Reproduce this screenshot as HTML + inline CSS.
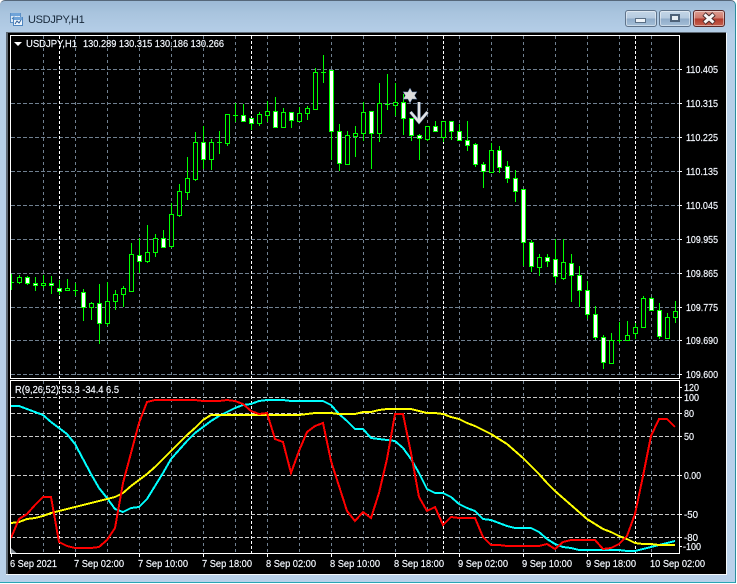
<!DOCTYPE html>
<html><head><meta charset="utf-8"><title>USDJPY,H1</title>
<style>
html,body{margin:0;padding:0;background:#fff}
body{width:737px;height:584px;overflow:hidden;position:relative;font-family:"Liberation Sans",sans-serif}
#win{position:absolute;left:0;top:0;width:736px;height:583px;background:linear-gradient(#9cb9d6 0,#a9c4de 12px,#b6cfe8 34px,#b9d1ea 100%);border-top:1px solid #56677a;border-right:1px solid #2a8f9f;border-bottom:1px solid #2aa5b5;box-sizing:border-box;border-top-right-radius:5px;border-top-left-radius:5px}
.t{position:absolute;left:28px;top:13px;font-size:11px;color:#17283a;letter-spacing:-.3px;line-height:14px}
.b{position:absolute;top:10px;height:17px;box-sizing:border-box;border:1px solid #5f738a;border-radius:3px;box-shadow:inset 0 0 0 1px rgba(255,255,255,.45)}
.bb{background:linear-gradient(#c3d5e7 0,#b5cadf 48%,#8fabc8 52%,#a5bfd8 100%)}
.br{background:linear-gradient(#dc9d92 0,#cf7a6c 48%,#b23a2c 52%,#c4604f 100%);border-color:#5a2a2a}
#c{position:absolute;left:0;top:0}
</style></head><body>
<div id="win"></div>
<div class="t">USDJPY,H1</div>
<div class="b bb" style="left:625px;width:32px"><div style="position:absolute;left:9px;top:7px;width:11px;height:5px;background:#eef3f8;border:1px solid #5a6e84;box-sizing:border-box"></div></div>
<div class="b bb" style="left:659px;width:32px"><div style="position:absolute;left:10px;top:3px;width:10px;height:8px;border:2px solid #4e6278;background:#e8eef4;box-sizing:border-box"></div></div>
<div class="b br" style="left:693px;width:32px"><svg width="30" height="15" style="position:absolute;left:0;top:0"><path d="M10 3L20 12M20 3L10 12" stroke="#4a2a2a" stroke-width="5"/><path d="M10.5 3.5L19.5 11.5M19.5 3.5L10.5 11.5" stroke="#f7f7f7" stroke-width="3"/></svg></div>
<svg id="c" width="737" height="584" viewBox="0 0 737 584" font-family="'Liberation Sans',sans-serif">
<defs>
<clipPath id="m"><rect x="11" y="36" width="668" height="342"/></clipPath>
<clipPath id="i"><rect x="11" y="381" width="668" height="172"/></clipPath>
</defs>
<!-- icon -->
<rect x="10.5" y="13.5" width="10" height="9" fill="#dbe9f7" stroke="#5d8fc4"/><rect x="11" y="13" width="9" height="3" fill="#6fa3d8"/>
<path d="M12 19l2-2 2 2 2-2" stroke="#4477aa" fill="none"/>
<rect x="13.5" y="17.5" width="9" height="8" fill="#eef5fc" stroke="#4f86c0"/><rect x="14" y="17" width="8" height="3" fill="#6fa3d8"/>
<path d="M15 24l2-3 2 2 2-3" stroke="#2f5f99" fill="none"/>
<!-- frame -->
<rect x="6" y="32" width="3" height="543" fill="#5d6772"/><rect x="6" y="32" width="720" height="2" fill="#5d6772"/>
<rect x="8" y="33" width="718" height="541" fill="#000"/>
<rect x="6" y="574" width="721" height="1" fill="#f5f9fc"/><rect x="726" y="33" width="1" height="542" fill="#f5f9fc"/>
<!-- grid main -->
<g stroke="#708090" fill="none" shape-rendering="crispEdges">
<path stroke-dasharray="4 2" d="M11 69.5H679M11 103.5H679M11 137.5H679M11 171.5H679M11 205.5H679M11 239.5H679M11 273.5H679M11 307.5H679M11 340.5H679M11 374.5H679"/>
<path stroke-dasharray="3 3" d="M43.5 36V378M75.5 36V378M107.5 36V378M139.5 36V378M171.5 36V378M203.5 36V378M235.5 36V378M267.5 36V378M299.5 36V378M331.5 36V378M363.5 36V378M395.5 36V378M427.5 36V378M459.5 36V378M491.5 36V378M523.5 36V378M555.5 36V378M587.5 36V378M619.5 36V378M651.5 36V378"/>
<path stroke-dasharray="3 3" d="M43.5 381V553M75.5 381V553M107.5 381V553M139.5 381V553M171.5 381V553M203.5 381V553M235.5 381V553M267.5 381V553M299.5 381V553M331.5 381V553M363.5 381V553M395.5 381V553M427.5 381V553M459.5 381V553M491.5 381V553M523.5 381V553M555.5 381V553M587.5 381V553M619.5 381V553M651.5 381V553"/>
</g>
<g stroke="#c8c8c8" fill="none" stroke-dasharray="4 2" shape-rendering="crispEdges">
<path d="M11 397.5H679M11 413.5H679M11 436.5H679M11 475.5H679M11 514.5H679M11 537.5H679"/>
</g>
<g stroke="#fff" fill="none" stroke-dasharray="3 2" shape-rendering="crispEdges">
<path d="M59.5 36V378M251.5 36V378M443.5 36V378M635.5 36V378M59.5 381V553M251.5 381V553M443.5 381V553M635.5 381V553"/>
</g>
<!-- candles -->
<g clip-path="url(#m)" shape-rendering="crispEdges" stroke="#0f0" fill="none">
<path d="M11.5 274V290M19.5 275V284M27.5 276V285M35.5 277V291M43.5 275V288M51.5 276V294M59.5 280V295M67.5 279V291M75.5 283V296M83.5 289V321M91.5 302V320M99.5 284V344M107.5 282V326M115.5 290V310M123.5 286V307M131.5 243V292M139.5 238V273M147.5 225V263M155.5 234V257M163.5 230V247M171.5 203V248M179.5 184V217M187.5 157V200M195.5 132V181M203.5 126V169M211.5 139V170M219.5 131V154M227.5 114V146M235.5 103V122M243.5 104V121M251.5 118V130M259.5 112V126M267.5 101V122M275.5 97V128M283.5 108V128M291.5 112V128M299.5 107V122M307.5 106V120M315.5 68V109M323.5 55V83M331.5 70V160M339.5 124V171M347.5 131V165M355.5 126V157M363.5 102V141M371.5 111V169M379.5 83V142M387.5 74V110M395.5 83V116M403.5 94V135M411.5 118V141M419.5 134V160M427.5 126V141M435.5 121V132M443.5 121V142M451.5 121V140M459.5 124V141M467.5 121V151M475.5 143V167M483.5 162V188M491.5 143V173M499.5 146V173M507.5 161V183M515.5 170V202M523.5 189V266M531.5 240V272M539.5 254V276M547.5 254V267M555.5 239V283M563.5 239V280M571.5 254V302M579.5 266V307M587.5 281V319M595.5 306V340M603.5 335V369M611.5 333V363M619.5 322V343M627.5 321V340M635.5 323V339M643.5 296V327M651.5 297V310M659.5 303V339M667.5 313V339M675.5 301V323"/>
<path d="M9 282.5h5M73 290.5h5M217 142.5h5M233 115.5h5M321 72.5h5M385 104.5h5M617 340.5h5"/>
<path fill="#000" d="M17.5 277.5h4V282.5h-4zM41.5 283.5h4V285.5h-4zM65.5 288.5h4V290.5h-4zM89.5 303.5h4V307.5h-4zM105.5 301.5h4V323.5h-4zM113.5 294.5h4V301.5h-4zM121.5 288.5h4V294.5h-4zM129.5 254.5h4V291.5h-4zM145.5 252.5h4V261.5h-4zM153.5 238.5h4V252.5h-4zM169.5 214.5h4V246.5h-4zM177.5 191.5h4V215.5h-4zM185.5 178.5h4V192.5h-4zM193.5 142.5h4V179.5h-4zM209.5 142.5h4V159.5h-4zM225.5 114.5h4V143.5h-4zM257.5 114.5h4V123.5h-4zM265.5 111.5h4V115.5h-4zM281.5 112.5h4V127.5h-4zM297.5 113.5h4V121.5h-4zM305.5 108.5h4V113.5h-4zM313.5 72.5h4V109.5h-4zM345.5 135.5h4V164.5h-4zM353.5 133.5h4V136.5h-4zM361.5 112.5h4V133.5h-4zM377.5 103.5h4V133.5h-4zM393.5 102.5h4V105.5h-4zM425.5 126.5h4V139.5h-4zM441.5 121.5h4V137.5h-4zM489.5 150.5h4V172.5h-4zM537.5 257.5h4V267.5h-4zM561.5 262.5h4V278.5h-4zM609.5 340.5h4V363.5h-4zM625.5 335.5h4V340.5h-4zM633.5 327.5h4V333.5h-4zM641.5 298.5h4V327.5h-4zM665.5 317.5h4V338.5h-4zM673.5 311.5h4V317.5h-4z"/>
<path fill="#fff" d="M25.5 277.5h4V283.5h-4zM33.5 283.5h4V285.5h-4zM49.5 283.5h4V285.5h-4zM57.5 288.5h4V291.5h-4zM81.5 292.5h4V307.5h-4zM97.5 303.5h4V323.5h-4zM137.5 255.5h4V261.5h-4zM161.5 238.5h4V247.5h-4zM201.5 142.5h4V159.5h-4zM241.5 115.5h4V121.5h-4zM249.5 118.5h4V123.5h-4zM273.5 111.5h4V127.5h-4zM289.5 112.5h4V120.5h-4zM329.5 70.5h4V131.5h-4zM337.5 131.5h4V163.5h-4zM369.5 111.5h4V133.5h-4zM401.5 102.5h4V118.5h-4zM409.5 118.5h4V135.5h-4zM417.5 135.5h4V138.5h-4zM433.5 126.5h4V131.5h-4zM449.5 121.5h4V131.5h-4zM457.5 131.5h4V140.5h-4zM465.5 140.5h4V145.5h-4zM473.5 144.5h4V164.5h-4zM481.5 164.5h4V171.5h-4zM497.5 150.5h4V167.5h-4zM505.5 166.5h4V178.5h-4zM513.5 178.5h4V191.5h-4zM521.5 189.5h4V242.5h-4zM529.5 242.5h4V266.5h-4zM545.5 257.5h4V261.5h-4zM553.5 259.5h4V276.5h-4zM569.5 263.5h4V275.5h-4zM577.5 275.5h4V290.5h-4zM585.5 290.5h4V314.5h-4zM593.5 314.5h4V337.5h-4zM601.5 337.5h4V362.5h-4zM649.5 298.5h4V310.5h-4zM657.5 310.5h4V336.5h-4z"/>
</g>
<!-- star & arrow -->
<path d="M410 88l2.2 4 4.8-.2-2.4 3.7 2.4 3.7-4.8-.2-2.2 4-2.2-4-4.8.2 2.4-3.7-2.4-3.7 4.8.2z" fill="#dcdcdc" stroke="#4a6a9a" stroke-width=".5"/>
<path d="M419 102V122M410.5 112L419 122L427.5 112" fill="none" stroke="#7f97b5" stroke-width="3.2"/>
<path d="M419 102V122M410.5 112L419 122L427.5 112" fill="none" stroke="#e4e4e4" stroke-width="2.2"/>
<!-- indicator -->
<g clip-path="url(#i)" fill="none" stroke-width="2" shape-rendering="crispEdges">
<polyline stroke="#0ff" points="11,406 19,406 27,409 35,412 43,415 51,422 59,428 67,434 75,444 83,459 91,474 99,488 107,498 115,509 123,512 131,508 139,507 147,499 155,486 163,473 171,459 179,450 187,441 195,433 203,427 211,421 219,416 227,412 235,408 243,405 251,404 259,401 267,400 275,400 283,400 291,401 299,401 307,401 315,401 323,401 331,405 339,414 347,421 355,429 363,429 371,438 379,439 387,440 395,441 403,448 411,459 419,473 427,489 435,493 443,493 451,497 459,504 467,508 475,511 483,519 491,520 499,523 507,526 515,528 523,528 531,528 539,532 547,539 555,544 563,547 571,548 579,550 587,550 595,550 603,550 611,550 619,550 627,551 635,551 643,549 651,547 659,545 667,543 675,541"/>
<polyline stroke="#ff0" points="11,523 19,522 27,519 35,518 43,516 51,513 59,511 67,509 75,507 83,505 91,503 99,501 107,499 115,497 123,493 131,486 139,480 147,474 155,467 163,459 171,451 179,443 187,435 195,428 203,420 211,415 219,415 227,415 235,415 243,415 251,415 259,415 267,415 275,415 283,415 291,415 299,415 307,414 315,413 323,413 331,413 339,414 347,414 355,414 363,412 371,412 379,410 387,409 395,409 403,409 411,409 419,411 427,413 435,413 443,414 451,417 459,419 467,423 475,426 483,430 491,434 499,439 507,444 515,451 523,458 531,466 539,474 547,483 555,491 563,498 571,505 579,512 587,519 595,524 603,529 611,532 619,536 627,539 635,543 643,544 651,544 659,545 667,545 675,545"/>
<polyline stroke="#f00" points="11,538 19,519 27,514 35,505 43,497 51,497 59,542 67,546 75,548 83,548 91,548 99,547 107,540 115,528 123,483 131,453 139,423 147,402 155,400 163,400 171,400 179,400 187,400 195,400 203,401 211,401 219,401 227,400 235,401 243,404 251,411 259,414 267,413 275,439 283,442 291,473 299,451 307,432 315,426 323,423 331,461 339,486 347,511 355,521 363,512 371,518 379,493 387,459 395,414 403,414 411,453 419,497 427,511 435,507 443,525 451,517 459,518 467,518 475,518 483,537 491,545 499,545 507,546 515,546 523,546 531,546 539,546 547,544 555,549 563,542 571,540 579,540 587,540 595,540 603,549 611,548 619,544 627,536 635,514 643,476 651,436 659,419 667,419 675,427"/>
</g>
<path d="M11 548L16.5 553H11z" fill="#8a929a"/>
<!-- borders -->
<g fill="none" stroke="#fff" shape-rendering="crispEdges">
<path d="M10.5 35.5H679.5V378.5H10.5z"/>
<path d="M10.5 380.5H679.5V553.5H10.5z"/>
<path d="M679 69.5h3M679 103.5h3M679 137.5h3M679 171.5h3M679 205.5h3M679 239.5h3M679 273.5h3M679 307.5h3M679 340.5h3M679 374.5h3M679 387.5h3M679 397.5h3M679 413.5h3M679 436.5h3M679 475.5h3M679 514.5h3M679 537.5h3M679 546.5h3"/>
<path d="M11.5 553v4M75.5 553v4M139.5 553v4M203.5 553v4M267.5 553v4M331.5 553v4M395.5 553v4M459.5 553v4M523.5 553v4M587.5 553v4M651.5 553v4"/>
</g>
<!-- legend triangle -->
<path d="M14 42h8l-4 4z" fill="#fff"/>
<g fill="#f4f8ff" stroke="#f4f8ff" stroke-width=".2" font-size="10.5px">
<text x="26" y="47" textLength="51" lengthAdjust="spacingAndGlyphs">USDJPY,H1</text>
<text x="83" y="47" textLength="141" lengthAdjust="spacingAndGlyphs">130.289 130.315 130.186 130.266</text>
<text x="15" y="393" textLength="104" lengthAdjust="spacingAndGlyphs">R(9,26,52) 53.3 -34.4 6.5</text>
<text x="686" y="73" textLength="32" lengthAdjust="spacingAndGlyphs">110.405</text>
<text x="686" y="107" textLength="32" lengthAdjust="spacingAndGlyphs">110.315</text>
<text x="686" y="141" textLength="32" lengthAdjust="spacingAndGlyphs">110.225</text>
<text x="686" y="175" textLength="32" lengthAdjust="spacingAndGlyphs">110.135</text>
<text x="686" y="209" textLength="32" lengthAdjust="spacingAndGlyphs">110.045</text>
<text x="686" y="243" textLength="32" lengthAdjust="spacingAndGlyphs">109.955</text>
<text x="686" y="277" textLength="32" lengthAdjust="spacingAndGlyphs">109.865</text>
<text x="686" y="311" textLength="32" lengthAdjust="spacingAndGlyphs">109.775</text>
<text x="686" y="344" textLength="32" lengthAdjust="spacingAndGlyphs">109.690</text>
<text x="686" y="378" textLength="32" lengthAdjust="spacingAndGlyphs">109.600</text>
<text x="684" y="391" textLength="15" lengthAdjust="spacingAndGlyphs">120</text>
<text x="684" y="401" textLength="15" lengthAdjust="spacingAndGlyphs">100</text>
<text x="684" y="417" textLength="10" lengthAdjust="spacingAndGlyphs">80</text>
<text x="684" y="440" textLength="10" lengthAdjust="spacingAndGlyphs">50</text>
<text x="684" y="479" textLength="17" lengthAdjust="spacingAndGlyphs">0.00</text>
<text x="684" y="518" textLength="14" lengthAdjust="spacingAndGlyphs">-50</text>
<text x="684" y="541" textLength="14" lengthAdjust="spacingAndGlyphs">-80</text>
<text x="683" y="550" textLength="18" lengthAdjust="spacingAndGlyphs">-100</text>
<text x="10" y="567" textLength="47" lengthAdjust="spacingAndGlyphs">6 Sep 2021</text>
<text x="74" y="567" textLength="50" lengthAdjust="spacingAndGlyphs">7 Sep 02:00</text>
<text x="138" y="567" textLength="50" lengthAdjust="spacingAndGlyphs">7 Sep 10:00</text>
<text x="202" y="567" textLength="50" lengthAdjust="spacingAndGlyphs">7 Sep 18:00</text>
<text x="266" y="567" textLength="50" lengthAdjust="spacingAndGlyphs">8 Sep 02:00</text>
<text x="330" y="567" textLength="50" lengthAdjust="spacingAndGlyphs">8 Sep 10:00</text>
<text x="394" y="567" textLength="50" lengthAdjust="spacingAndGlyphs">8 Sep 18:00</text>
<text x="458" y="567" textLength="50" lengthAdjust="spacingAndGlyphs">9 Sep 02:00</text>
<text x="522" y="567" textLength="50" lengthAdjust="spacingAndGlyphs">9 Sep 10:00</text>
<text x="586" y="567" textLength="50" lengthAdjust="spacingAndGlyphs">9 Sep 18:00</text>
<text x="650" y="567" textLength="55" lengthAdjust="spacingAndGlyphs">10 Sep 02:00</text>
</g>
</svg>
</body></html>
